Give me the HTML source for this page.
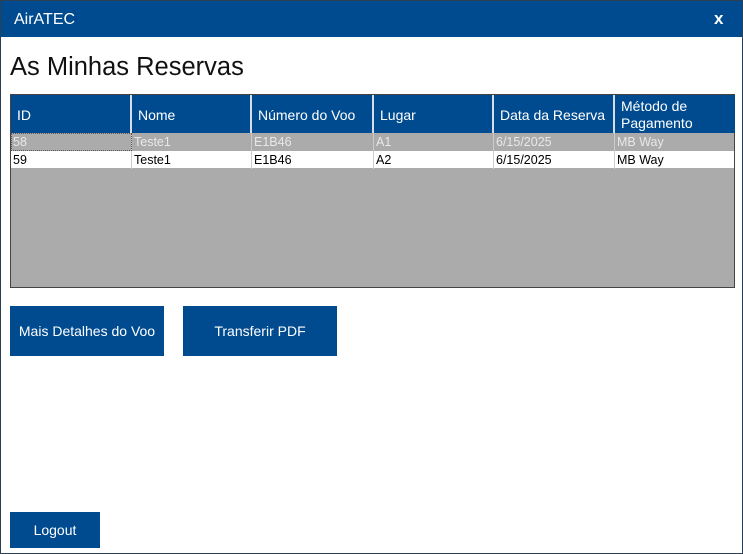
<!DOCTYPE html>
<html><head><style>
*{margin:0;padding:0;box-sizing:border-box}
body{width:743px;height:554px;position:relative;background:#fff;font-family:"Liberation Sans",sans-serif;overflow:hidden}
.frame{position:absolute;left:0;top:0;width:743px;height:554px;border:1px solid #2b3f55}
.title{position:absolute;left:0;top:0;width:743px;height:37px;background:#004b8f;color:#fff}
.a{position:absolute;white-space:nowrap}
.grid{position:absolute;left:10px;top:94px;width:725px;height:194px;background:#ababab;border:1px solid #444}
.h{position:absolute;top:0;height:38px;background:#004b8f;color:#fff;font-size:14px;border-right:2px solid #d6dde8;padding-left:6px;line-height:40px}
.c{position:absolute;height:18px;font-size:12.5px;line-height:18px;padding-left:2px;border-right:1px solid #ccc}
.btn{position:absolute;background:#004b8f;color:#fff;font-size:14px;text-align:center}
</style></head><body>
<div class="title">
<div class="a" style="left:14px;top:11px;font-size:16px">AirATEC</div>
<div class="a" style="left:714px;top:9px;font-size:17px;font-weight:bold">x</div>
</div>
<div class="a" style="left:10px;top:53px;font-size:25.5px;color:#111">As Minhas Reservas</div>
<div class="grid">
<div class="h" style="left:0;width:121px">ID</div>
<div class="h" style="left:121px;width:120px">Nome</div>
<div class="h" style="left:241px;width:122px">Número do Voo</div>
<div class="h" style="left:363px;width:120px">Lugar</div>
<div class="h" style="left:483px;width:121px">Data da Reserva</div>
<div class="h" style="left:604px;width:120px;border-right:none;line-height:17px;padding-top:3px">Método de<br>Pagamento</div>
<div class="c" style="left:0;top:38px;width:121px;color:#e8e8e8;outline:1px dotted #555;outline-offset:-1px">58</div>
<div class="c" style="left:121px;top:38px;width:120px;color:#e8e8e8">Teste1</div>
<div class="c" style="left:241px;top:38px;width:122px;color:#e8e8e8">E1B46</div>
<div class="c" style="left:363px;top:38px;width:120px;color:#e8e8e8">A1</div>
<div class="c" style="left:483px;top:38px;width:121px;color:#e8e8e8">6/15/2025</div>
<div class="c" style="left:604px;top:38px;width:120px;color:#e8e8e8;border:none">MB Way</div>
<div style="position:absolute;left:0;top:56px;width:723px;height:17px;background:#fff"></div>
<div class="c" style="left:0;top:56px;width:121px">59</div>
<div class="c" style="left:121px;top:56px;width:120px">Teste1</div>
<div class="c" style="left:241px;top:56px;width:122px">E1B46</div>
<div class="c" style="left:363px;top:56px;width:120px">A2</div>
<div class="c" style="left:483px;top:56px;width:121px">6/15/2025</div>
<div class="c" style="left:604px;top:56px;width:120px;border:none">MB Way</div>
</div>
<div class="btn" style="left:10px;top:306px;width:154px;height:50px;line-height:50px">Mais Detalhes do Voo</div>
<div class="btn" style="left:183px;top:306px;width:154px;height:50px;line-height:50px">Transferir PDF</div>
<div class="btn" style="left:10px;top:512px;width:90px;height:36px;line-height:36px">Logout</div>
<div class="frame"></div>
</body></html>
